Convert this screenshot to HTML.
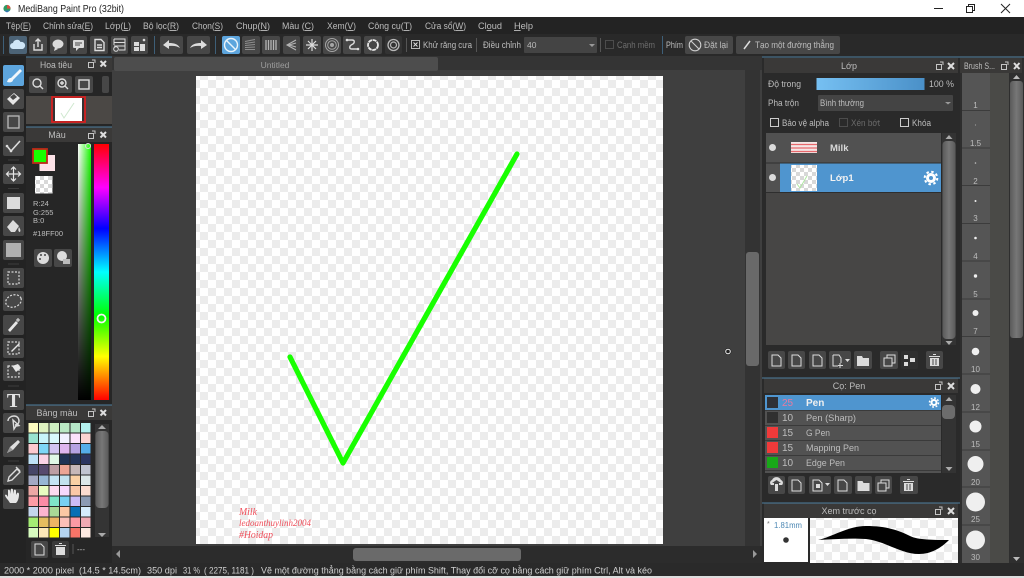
<!DOCTYPE html>
<html><head><meta charset="utf-8"><style>
html,body{margin:0;padding:0;background:#2a2a2a;width:1024px;height:578px;overflow:hidden}
svg{display:block;filter:blur(.35px)}
text{font-family:"Liberation Sans","Noto Sans CJK SC",sans-serif;font-size:9px;fill:#bdbdbd}
.b{fill:#474747}.i{fill:#dcdcdc}.s{fill:none;stroke:#dcdcdc;stroke-width:1.4}.d{fill:none;stroke:#d8d8d8;stroke-width:1.2;stroke-dasharray:2 1.5}
.h{fill:#3a3938}.l{fill:#4d7f9f}.c{text-anchor:middle}.u{text-decoration:underline}
</style></head><body>
<svg width="1024" height="578" viewBox="0 0 1024 578" xmlns="http://www.w3.org/2000/svg">
<defs>
<pattern id="ck" width="16" height="16" patternUnits="userSpaceOnUse"><rect width="16" height="16" fill="#fff"/><rect width="8" height="8" fill="#ececec"/><rect x="8" y="8" width="8" height="8" fill="#ececec"/></pattern>
<pattern id="ck2" width="8" height="8" patternUnits="userSpaceOnUse"><rect width="8" height="8" fill="#fff"/><rect width="4" height="4" fill="#d8d8d8"/><rect x="4" y="4" width="4" height="4" fill="#d8d8d8"/></pattern>
<linearGradient id="hue" x1="0" y1="0" x2="0" y2="1"><stop offset="0" stop-color="#f00"/><stop offset=".17" stop-color="#f0f"/><stop offset=".33" stop-color="#00f"/><stop offset=".5" stop-color="#0ff"/><stop offset=".67" stop-color="#0f0"/><stop offset=".83" stop-color="#ff0"/><stop offset="1" stop-color="#f00"/></linearGradient>
<linearGradient id="sat" x1="0" y1="0" x2="1" y2="0"><stop offset="0" stop-color="#fff"/><stop offset="1" stop-color="#18ff00"/></linearGradient>
<linearGradient id="blk" x1="0" y1="0" x2="0" y2="1"><stop offset="0" stop-color="#000" stop-opacity="0"/><stop offset="1" stop-color="#000"/></linearGradient>
<linearGradient id="op" x1="0" y1="0" x2="1" y2="0"><stop offset="0" stop-color="#76c0f2"/><stop offset="1" stop-color="#4a90c8"/></linearGradient>
<linearGradient id="sb" x1="0" y1="0" x2="1" y2="0"><stop offset="0" stop-color="#5a5a5a"/><stop offset=".5" stop-color="#777"/><stop offset="1" stop-color="#5a5a5a"/></linearGradient>
</defs>

<!-- title bar -->
<rect width="1024" height="17" fill="#fff"/>
<circle cx="7" cy="8.500" r="3.600" fill="#2f9a62"/><path d="M7 5a3.600 3.600 0 0 1 3.600 3.600H7z" fill="#d9503f"/><path d="M4 10.500h6l-3 2z" fill="#3572b8"/>
<text x="18" y="12" textLength="106" lengthAdjust="spacingAndGlyphs" style="font-size:10.500px;fill:#222">MediBang Paint Pro (32bit)</text>
<path d="M934 8.500h9" stroke="#222"/><path d="M966.500 6.500h6v6h-6zM968.500 6.500v-2h6v6h-2" fill="none" stroke="#222"/><path d="M1001 4l9 9M1010 4l-9 9" stroke="#222"/>

<!-- menu + toolbar -->
<rect y="17" width="1024" height="17" fill="#232323"/>
<rect y="34" width="1024" height="22" fill="#292929"/>
<text x="6" y="29" textLength="25" lengthAdjust="spacingAndGlyphs">Tệp(<tspan class="u">E</tspan>)</text>
<text x="43" y="29" textLength="50" lengthAdjust="spacingAndGlyphs">Chỉnh sửa(<tspan class="u">E</tspan>)</text>
<text x="105" y="29" textLength="26" lengthAdjust="spacingAndGlyphs">Lớp(<tspan class="u">L</tspan>)</text>
<text x="143" y="29" textLength="36" lengthAdjust="spacingAndGlyphs">Bộ lọc(<tspan class="u">R</tspan>)</text>
<text x="192" y="29" textLength="31" lengthAdjust="spacingAndGlyphs">Chọn(<tspan class="u">S</tspan>)</text>
<text x="236" y="29" textLength="34" lengthAdjust="spacingAndGlyphs">Chụp(<tspan class="u">N</tspan>)</text>
<text x="282" y="29" textLength="32" lengthAdjust="spacingAndGlyphs">Màu (<tspan class="u">C</tspan>)</text>
<text x="327" y="29" textLength="29" lengthAdjust="spacingAndGlyphs">Xem(<tspan class="u">V</tspan>)</text>
<text x="368" y="29" textLength="44" lengthAdjust="spacingAndGlyphs">Công cụ(<tspan class="u">T</tspan>)</text>
<text x="425" y="29" textLength="41" lengthAdjust="spacingAndGlyphs">Cửa sổ(<tspan class="u">W</tspan>)</text>
<text x="478" y="29" textLength="24" lengthAdjust="spacingAndGlyphs">Cl<tspan class="u">o</tspan>ud</text>
<text x="514" y="29" textLength="19" lengthAdjust="spacingAndGlyphs"><tspan class="u">H</tspan>elp</text>
<!-- toolbar seps -->
<path d="M3.500 36v18M154.500 36v18M215.500 36v18M662.500 36v18" stroke="#3e5f78"/>
<!-- toolbar buttons -->
<g class="b">
<rect x="9" y="36" width="18" height="18" rx="2" fill="#4c6376"/>
<rect x="29" y="36" width="18" height="18" rx="2"/><rect x="50" y="36" width="17" height="18" rx="2"/><rect x="70" y="36" width="17" height="18" rx="2"/><rect x="90" y="36" width="18" height="18" rx="2"/><rect x="111" y="36" width="17" height="18" rx="2"/><rect x="131" y="36" width="17" height="18" rx="2"/>
<rect x="160" y="36" width="23" height="18" rx="2"/><rect x="187" y="36" width="23" height="18" rx="2"/>
<rect x="222" y="36" width="18" height="18" rx="2" fill="#5da5dd"/>
<rect x="242" y="36" width="18" height="18" rx="2"/><rect x="262" y="36" width="18" height="18" rx="2"/><rect x="283" y="36" width="17" height="18" rx="2"/><rect x="303" y="36" width="18" height="18" rx="2"/><rect x="323" y="36" width="18" height="18" rx="2"/><rect x="343" y="36" width="18" height="18" rx="2"/><rect x="364" y="36" width="18" height="18" rx="2"/><rect x="385" y="36" width="17" height="18" rx="2" fill="#333"/>
<rect x="524" y="37" width="73" height="16" rx="1" fill="#444"/>
<rect x="685" y="36" width="48" height="18" rx="2"/><rect x="736" y="36" width="104" height="18" rx="2"/>
</g>
<!-- toolbar icons -->
<path d="M13 49a3 3 0 0 1 0-6 4 4 0 0 1 7.500-1 3.500 3.500 0 0 1 2 7z" fill="#cfe6f7"/>
<path class="s" d="M34 44v6h8v-6M38 47v-8M35.500 41.500L38 39l2.500 2.500"/>
<ellipse cx="58" cy="44" rx="5.500" ry="4.500" class="i"/><path class="i" d="M55 47l-1 4 4-2z"/>
<rect x="73" y="40" width="11" height="8" rx="1" class="i"/><path class="i" d="M76 48h3l-3 3z"/><path d="M75 43h7M75 45h5" stroke="#474747"/>
<path class="s" d="M95 39.500h6l3 3v8h-9zM97 45h5M97 47.500h5"/>
<path class="s" style="stroke-width:1" d="M114 39h11v11h-6M114 39v6M114 42.500h11M114 46h11"/><circle cx="116" cy="49" r="2.300" class="s" style="stroke-width:1"/>
<path class="i" d="M134 42h5v4h-5zM134 47h5v4h-5zM140 44h5v7h-5z"/><circle cx="144" cy="40" r="1.300" class="i"/>
<path class="i" d="M163 45l6-5v3c5 0 9 1 11 5-3-2-6-2.500-11-2v3z"/>
<path class="i" d="M207 45l-6-5v3c-5 0-9 1-11 5 3-2 6-2.500 11-2v3z"/>
<circle cx="231" cy="45" r="6.500" fill="none" stroke="#eaf4fb" stroke-width="1.400"/><path d="M226.500 40.500l9 9" stroke="#eaf4fb" stroke-width="1.400"/>
<path d="M245 41.500l10-2M245 43.500l10-1.500M245 45.500l10-1M245 47.500l10-.5M245 49.500l10 0" stroke="#8f8f8f" fill="none"/>
<path d="M266 40v10M268.500 40v10M271 40v10M273.500 40v10M276 40v10" stroke="#b4b4b4" stroke-width="1.300" fill="none"/>
<path d="M296 40l-9 5 9 5M296 43l-7 2 7 2" stroke="#b4b4b4" fill="none" stroke-width="1.100"/>
<path d="M312 39v12M306 45h12M308 41l8 8M316 41l-8 8" stroke="#dcdcdc" stroke-width="1.200"/>
<circle cx="332" cy="45" r="6.500" fill="none" stroke="#a5a5a5"/><circle cx="332" cy="45" r="4.300" fill="none" stroke="#a5a5a5"/><circle cx="332" cy="45" r="2" fill="#a5a5a5"/>
<path class="s" d="M347 40h5c3 0 3 3 0 4.500-3 1.500-3 4.500 0 4.500h6"/><circle cx="347" cy="40" r="1.300" class="i"/><circle cx="358" cy="49" r="1.300" class="i"/>
<circle cx="373" cy="45" r="5" fill="none" stroke="#e8e8e8" stroke-width="1.800" stroke-dasharray="4 .6"/>
<circle cx="393.500" cy="45" r="5.500" fill="none" stroke="#b8b8b8" stroke-width="1.300"/><circle cx="393.500" cy="45" r="3" fill="none" stroke="#b8b8b8" stroke-width="1.200"/>
<path d="M406.500 38v14M476.500 38v14M600.500 38v14" stroke="#555"/>
<rect x="411.500" y="40.500" width="8" height="8" fill="none" stroke="#bbb"/><path d="M413.500 42.500l4 4M417.500 42.500l-4 4" stroke="#ddd"/>
<text x="423" y="48" textLength="49" lengthAdjust="spacingAndGlyphs">Khử răng cưa</text>
<text x="483" y="48" textLength="38" lengthAdjust="spacingAndGlyphs">Điều chỉnh</text>
<text x="527" y="48" style="font-size:8.500px;fill:#bbb">40</text>
<path d="M589 44h6l-3 3z" fill="#999"/>
<rect x="605.500" y="40.500" width="8" height="8" fill="none" stroke="#4c4c4c"/>
<text x="617" y="48" textLength="38" lengthAdjust="spacingAndGlyphs" style="fill:#6d6d6d">Cạnh mềm</text>
<text x="666" y="48" textLength="17" lengthAdjust="spacingAndGlyphs">Phím</text>
<circle cx="695" cy="45" r="5.800" fill="none" stroke="#cfcfcf" stroke-width="1.100"/><path d="M691 41l8 8" stroke="#cfcfcf" stroke-width="1.100"/>
<text x="704" y="48" textLength="24" lengthAdjust="spacingAndGlyphs">Đặt lại</text>
<path d="M744 49l6-8" stroke="#ddd" stroke-width="1.500"/>
<text x="755" y="48" textLength="79" lengthAdjust="spacingAndGlyphs">Tạo một đường thẳng</text>

<!-- left tool column -->
<rect x="0" y="56" width="26" height="507" fill="#232323"/>
<g class="b">
<rect x="3" y="65" width="21" height="21" rx="2" fill="#5da5dd"/>
<rect x="3" y="89" width="21" height="20" rx="2"/><rect x="3" y="112" width="21" height="20" rx="2"/><rect x="3" y="136" width="21" height="20" rx="2"/>
<rect x="3" y="164" width="21" height="20" rx="2"/><rect x="3" y="193" width="21" height="20" rx="2"/><rect x="3" y="216" width="21" height="20" rx="2"/><rect x="3" y="240" width="21" height="20" rx="2"/>
<rect x="3" y="268" width="21" height="20" rx="2"/><rect x="3" y="291" width="21" height="20" rx="2"/><rect x="3" y="315" width="21" height="20" rx="2"/><rect x="3" y="338" width="21" height="20" rx="2"/><rect x="3" y="361" width="21" height="20" rx="2"/>
<rect x="3" y="390" width="21" height="20" rx="2"/><rect x="3" y="413" width="21" height="20" rx="2"/><rect x="3" y="437" width="21" height="20" rx="2"/>
<rect x="3" y="465" width="21" height="20" rx="2"/><rect x="3" y="489" width="21" height="20" rx="2"/>
</g>
<path d="M8 160h11M8 188.500h11M8 264h11M8 386h11M8 461h11" stroke="#3c3c3c"/>
<path d="M7 82c1-3 2-4 4-4l9-9 2 2-9 9c0 2-3 3-6 2z" fill="#f0f6fb"/>
<path d="M7 99l7-6 6 5-7 7z" fill="#e6e6e6"/><path d="M10 97l3 3 4-3-3-3z" fill="#474747"/>
<rect x="8" y="116" width="11" height="12" fill="none" stroke="#bbb" stroke-width="1.300"/>
<path d="M7 146l4 5 9-10" fill="none" stroke="#dcdcdc" stroke-width="1.600"/><circle cx="7" cy="146" r="1.300" class="i"/><circle cx="11" cy="151" r="1.300" class="i"/>
<path d="M13.500 167v14M6.500 174h14M11 169.500l2.500-2.500 2.500 2.500M11 178.500l2.500 2.500 2.500-2.500M9 171.500L6.500 174l2.500 2.500M18 171.500l2.500 2.500-2.500 2.500" fill="none" stroke="#e6e6e6" stroke-width="1.200"/>
<rect x="7" y="197" width="13" height="12" fill="#dcdcdc"/>
<path d="M7 227l6-7 6 6-4 6h-4zM19 227c1 2 2 3 1 5-2 0-2-3-1-5z" fill="#dcdcdc"/>
<rect x="6" y="243" width="15" height="14" fill="#b0b0b0"/>
<rect x="8" y="272" width="11" height="12" class="d"/>
<ellipse cx="13.500" cy="301" rx="8" ry="6" transform="rotate(-20 13.500 301)" class="d"/>
<path d="M8 330l8-9 2 2-8 9z" fill="#e6e6e6"/><path d="M18 318v4M16 320h4" stroke="#e6e6e6"/>
<rect x="8" y="342" width="11" height="12" class="d"/><path d="M11 351l8-8 1 1-8 8z" fill="#e6e6e6"/>
<rect x="8" y="366" width="11" height="11" class="d"/><path d="M12 366l6 -2 3 4-5 4z" fill="#e6e6e6"/>
<text x="13.500" y="407" class="c" style="font-family:'Liberation Serif',serif;font-size:20px;font-weight:bold;fill:#e4e4e4">T</text>
<path class="s" d="M8 421c0-3 3-5 6-5s5 2 5 5-3 4-4 4M13 420l1 9 2-3 3-.5z"/>
<path d="M7 453l3-6 8-7 2 2-7 8z" fill="#e0e0e0"/><path d="M7 453l3-6 3 3z" fill="#999"/>
<path class="s" d="M8 481l1-4 8-8 3 3-8 8zM16 467l4 4"/>
<path d="M8 500c-2-2-3-4-3-5 1-1 2 0 3 2l0-7c1-1 2 0 2 1v3l1-5c1-1 2 0 2 1v4l1-4c1-1 2 0 2 1v4l1-2c1-1 2 0 2 1 0 4-1 7-3 9h-6z" fill="#e6e6e6"/>

<!-- left panels bg -->
<rect x="26" y="56" width="86" height="507" fill="#262626"/>
<!-- navigator -->
<rect x="26" y="57" width="86" height="15" class="h"/><rect x="26" y="56.500" width="86" height="1" class="l"/>
<text x="56" y="68" class="c" textLength="32" lengthAdjust="spacingAndGlyphs">Hoa tiêu</text>
<rect x="88.500" y="62.500" width="5" height="5" fill="none" stroke="#c5c5c5"/><path d="M92 60h3v3" stroke="#c5c5c5" fill="none"/>
<path d="M100.500 61l5.500 5.500M106 61l-5.500 5.500" stroke="#dedede" stroke-width="2"/>
<rect x="29" y="76" width="18" height="17" rx="2" class="b"/><rect x="55" y="76" width="17" height="17" rx="2" class="b"/><rect x="75" y="76" width="18" height="17" rx="2" class="b"/><rect x="102" y="76" width="7" height="17" rx="2" class="b"/>
<circle cx="37" cy="83" r="4" class="s"/><path d="M40 86l3 3" class="s"/><circle cx="62" cy="83" r="4" class="s"/><path d="M65 86l3 3M60 83h4M62 81v4" class="s"/>
<rect x="79" y="80" width="10" height="9" class="s"/>
<rect x="26" y="96" width="86" height="28" fill="#4b4845"/>
<rect x="52" y="97" width="33" height="25" fill="#333"/><rect x="55" y="98" width="27" height="23" fill="#fff"/><rect x="52" y="97" width="33" height="25" fill="none" stroke="#d42020" stroke-width="1.800"/>
<path d="M61 113l3 5 10-15" fill="none" stroke="#cfe8cf"/>
<!-- colour -->
<rect x="26" y="127" width="86" height="15" class="h"/><rect x="26" y="126.500" width="86" height="1" class="l"/>
<text x="57" y="138" class="c">Màu</text>
<rect x="88.500" y="133.500" width="5" height="5" fill="none" stroke="#c5c5c5"/><path d="M92 131h3v3" stroke="#c5c5c5" fill="none"/>
<path d="M100.500 132l5.500 5.500M106 132l-5.500 5.500" stroke="#dedede" stroke-width="2"/>
<rect x="39.500" y="155" width="15.500" height="16" fill="#fde3e8"/>
<rect x="33" y="149" width="14" height="14" fill="#18ff00" stroke="#c02818" stroke-width="1.800"/>
<rect x="35" y="176" width="17.500" height="17.500" fill="url(#ck2)"/>
<text x="33" y="206" style="font-size:7.500px">R:24</text><text x="33" y="215" style="font-size:7.500px">G:255</text><text x="33" y="223" style="font-size:7.500px">B:0</text><text x="33" y="236" style="font-size:7.500px">#18FF00</text>
<rect x="78" y="144" width="13" height="256" fill="url(#sat)"/><rect x="78" y="144" width="13" height="256" fill="url(#blk)"/>
<rect x="94" y="144" width="15" height="256" fill="url(#hue)"/>
<circle cx="101.500" cy="318.500" r="4" fill="none" stroke="#f2f2f2" stroke-width="1.800"/>
<circle cx="88" cy="146" r="2.500" fill="none" stroke="#ddd"/>
<rect x="34" y="249" width="18" height="18" rx="2" class="b"/><rect x="54" y="249" width="18" height="18" rx="2" class="b"/>
<circle cx="43" cy="258" r="6" class="i"/><circle cx="41" cy="255" r="1" fill="#444"/><circle cx="45" cy="255" r="1" fill="#444"/><circle cx="40" cy="259" r="1" fill="#444"/>
<circle cx="62" cy="256" r="5" class="i"/><rect x="63" y="259" width="7" height="5" fill="#bbb"/>
<!-- palette -->
<rect x="26" y="405" width="86" height="15" class="h"/><rect x="26" y="404.500" width="86" height="1" class="l"/>
<text x="57" y="416" class="c">Bảng màu</text>
<rect x="88.500" y="411.500" width="5" height="5" fill="none" stroke="#c5c5c5"/><path d="M92 409h3v3" stroke="#c5c5c5" fill="none"/>
<path d="M100.500 410l5.500 5.500M106 410l-5.500 5.500" stroke="#dedede" stroke-width="2"/>
<g>
<rect x="28.500" y="423" width="9.500" height="9.500" fill="#fdfcc0"/><rect x="39" y="423" width="9.500" height="9.500" fill="#dff3c0"/><rect x="49.500" y="423" width="9.500" height="9.500" fill="#cdeec0"/><rect x="60" y="423" width="9.500" height="9.500" fill="#b9e8c3"/><rect x="70.500" y="423" width="9.500" height="9.500" fill="#b5e7c8"/><rect x="81" y="423" width="9.500" height="9.500" fill="#b3f1ee"/>
<rect x="28.500" y="433.500" width="9.500" height="9.500" fill="#99e3d0"/><rect x="39" y="433.500" width="9.500" height="9.500" fill="#c8f4fa"/><rect x="49.500" y="433.500" width="9.500" height="9.500" fill="#d9f9fc"/><rect x="60" y="433.500" width="9.500" height="9.500" fill="#f2f2ff"/><rect x="70.500" y="433.500" width="9.500" height="9.500" fill="#fbe2fc"/><rect x="81" y="433.500" width="9.500" height="9.500" fill="#fbd4d2"/>
<rect x="28.500" y="444" width="9.500" height="9.500" fill="#fcc9cf"/><rect x="39" y="444" width="9.500" height="9.500" fill="#7ed6f7"/><rect x="49.500" y="444" width="9.500" height="9.500" fill="#d3c5f2"/><rect x="60" y="444" width="9.500" height="9.500" fill="#ddb6ee"/><rect x="70.500" y="444" width="9.500" height="9.500" fill="#b5a2e2"/><rect x="81" y="444" width="9.500" height="9.500" fill="#55ade8"/>
<rect x="28.500" y="454.500" width="9.500" height="9.500" fill="#bfe2f7"/><rect x="39" y="454.500" width="9.500" height="9.500" fill="#fcd3e6"/><rect x="49.500" y="454.500" width="9.500" height="9.500" fill="#e0f8e6"/><rect x="60" y="454.500" width="9.500" height="9.500" fill="#1f3354"/><rect x="70.500" y="454.500" width="9.500" height="9.500" fill="#243458"/><rect x="81" y="454.500" width="9.500" height="9.500" fill="#2c3660"/>
<rect x="28.500" y="465" width="9.500" height="9.500" fill="#464668"/><rect x="39" y="465" width="9.500" height="9.500" fill="#574a6d"/><rect x="49.500" y="465" width="9.500" height="9.500" fill="#bd9ea4"/><rect x="60" y="465" width="9.500" height="9.500" fill="#eca594"/><rect x="70.500" y="465" width="9.500" height="9.500" fill="#c6b8b8"/><rect x="81" y="465" width="9.500" height="9.500" fill="#c1c4d0"/>
<rect x="28.500" y="475.500" width="9.500" height="9.500" fill="#a3a9c4"/><rect x="39" y="475.500" width="9.500" height="9.500" fill="#97b7d4"/><rect x="49.500" y="475.500" width="9.500" height="9.500" fill="#c5e4f4"/><rect x="60" y="475.500" width="9.500" height="9.500" fill="#c2e2ee"/><rect x="70.500" y="475.500" width="9.500" height="9.500" fill="#fad1a4"/><rect x="81" y="475.500" width="9.500" height="9.500" fill="#dce7e8"/>
<rect x="28.500" y="486" width="9.500" height="9.500" fill="#eda8a5"/><rect x="39" y="486" width="9.500" height="9.500" fill="#e8fdc0"/><rect x="49.500" y="486" width="9.500" height="9.500" fill="#fcdaf0"/><rect x="60" y="486" width="9.500" height="9.500" fill="#f6d8fc"/><rect x="70.500" y="486" width="9.500" height="9.500" fill="#fbc8a6"/><rect x="81" y="486" width="9.500" height="9.500" fill="#fcdcd0"/>
<rect x="28.500" y="496.500" width="9.500" height="9.500" fill="#fc9ca6"/><rect x="39" y="496.500" width="9.500" height="9.500" fill="#fa8ca6"/><rect x="49.500" y="496.500" width="9.500" height="9.500" fill="#7fe4c8"/><rect x="60" y="496.500" width="9.500" height="9.500" fill="#78d0f2"/><rect x="70.500" y="496.500" width="9.500" height="9.500" fill="#ccbcf5"/><rect x="81" y="496.500" width="9.500" height="9.500" fill="#8c9bb4"/>
<rect x="28.500" y="507" width="9.500" height="9.500" fill="#c4d6ee"/><rect x="39" y="507" width="9.500" height="9.500" fill="#fcb4d0"/><rect x="49.500" y="507" width="9.500" height="9.500" fill="#a9d896"/><rect x="60" y="507" width="9.500" height="9.500" fill="#fbc8a4"/><rect x="70.500" y="507" width="9.500" height="9.500" fill="#0a6fb4"/><rect x="81" y="507" width="9.500" height="9.500" fill="#d5ecfc"/>
<rect x="28.500" y="517.500" width="9.500" height="9.500" fill="#a4ec74"/><rect x="39" y="517.500" width="9.500" height="9.500" fill="#e4bc60"/><rect x="49.500" y="517.500" width="9.500" height="9.500" fill="#ecb464"/><rect x="60" y="517.500" width="9.500" height="9.500" fill="#fcc0b8"/><rect x="70.500" y="517.500" width="9.500" height="9.500" fill="#fc9aa4"/><rect x="81" y="517.500" width="9.500" height="9.500" fill="#f0aab4"/>
<rect x="28.500" y="528" width="9.500" height="9.500" fill="#d8fcc0"/><rect x="39" y="528" width="9.500" height="9.500" fill="#fde8b8"/><rect x="49.500" y="528" width="9.500" height="9.500" fill="#ffff00"/><rect x="60" y="528" width="9.500" height="9.500" fill="#b4d4f0"/><rect x="70.500" y="528" width="9.500" height="9.500" fill="#f87468"/><rect x="81" y="528" width="9.500" height="9.500" fill="#fce8e0"/>
</g>
<rect x="95" y="424" width="14" height="113" fill="#343434"/><rect x="95.500" y="431" width="13" height="77" rx="4" fill="url(#sb)"/>
<path d="M102 425l-4 4h8zM102 537l-4-4h8z" fill="#aaa"/>
<rect x="31" y="541" width="17" height="17" rx="2" class="b"/><rect x="52" y="541" width="17" height="17" rx="2" fill="#3a3a3a"/>
<path class="s" d="M35 544h6l3 3v8h-9z" style="stroke-width:1"/><path class="i" d="M56 547h9v8h-9zM55 545h11v1h-11zM59 543h3v1h-3z"/>
<path d="M73 544v10" stroke="#555"/><text x="77" y="552" style="font-size:8px">---</text>

<!-- canvas area -->
<rect x="112" y="56" width="650" height="507" fill="#3f3f3f"/>
<rect x="112" y="56" width="650" height="14" fill="#343434"/>
<rect x="114" y="57" width="324" height="14" rx="2" fill="#4d4d4d"/>
<text x="275" y="68" class="c" style="font-size:8.500px;fill:#9d9d9d">Untitled</text>
<rect x="196" y="76" width="467" height="468" fill="url(#ck)"/>
<polyline points="290,357 343,463 517,154" fill="none" stroke="#18ff00" stroke-width="5.200" stroke-linecap="round" stroke-linejoin="round"/>
<text x="239" y="515" textLength="18" lengthAdjust="spacingAndGlyphs" style="font-family:'Liberation Serif',serif;font-style:italic;font-size:10px;fill:#f0505c">Milk</text>
<text x="239" y="526" textLength="72" lengthAdjust="spacingAndGlyphs" style="font-family:'Liberation Serif',serif;font-style:italic;font-size:9.500px;fill:#f0505c">ledoanthuylinh2004</text>
<text x="239" y="538" textLength="34" lengthAdjust="spacingAndGlyphs" style="font-family:'Liberation Serif',serif;font-style:italic;font-size:10px;fill:#f0505c">#Hoidap</text>
<!-- canvas scrollbars -->
<rect x="112" y="546" width="650" height="17" fill="#2c2c2c"/>
<rect x="353" y="548" width="168" height="13" rx="3" fill="#6a6a6a"/>
<path d="M116 554l4-4v8zM757 554l-4-4v8z" fill="#999"/>
<rect x="745" y="70" width="15" height="476" fill="#333"/>
<rect x="746" y="252" width="13" height="114" rx="3" fill="#696969"/>
<circle cx="728" cy="351.500" r="3.400" fill="#222"/><circle cx="728" cy="351.500" r="2.300" fill="none" stroke="#eee" stroke-width="1"/>

<!-- layer panel -->
<rect x="762" y="56" width="198" height="322" fill="#2a2a2a"/>
<rect x="764" y="58" width="194" height="15" class="h"/><rect x="762" y="56.500" width="198" height="1" class="l"/>
<text x="849" y="69" class="c">Lớp</text>
<rect x="936.500" y="64.500" width="5" height="5" fill="none" stroke="#c5c5c5"/><path d="M940 62h3v3" stroke="#c5c5c5" fill="none"/>
<path d="M948 63l6 6M954 63l-6 6" stroke="#dedede" stroke-width="2"/>
<text x="768" y="87" textLength="33" lengthAdjust="spacingAndGlyphs">Độ trong</text>
<rect x="816.500" y="78" width="108" height="12" fill="url(#op)"/>
<text x="929" y="87" textLength="25" lengthAdjust="spacingAndGlyphs">100 %</text>
<text x="768" y="106" textLength="31" lengthAdjust="spacingAndGlyphs">Pha trộn</text>
<rect x="818" y="95" width="135" height="16" rx="1" fill="#444"/>
<text x="820" y="106" textLength="44" lengthAdjust="spacingAndGlyphs">Bình thường</text>
<path d="M945 102h6l-3 2.500z" fill="#999"/>
<rect x="770.500" y="118.500" width="8" height="8" fill="none" stroke="#ccc"/><text x="782" y="126" textLength="47" lengthAdjust="spacingAndGlyphs">Bảo vệ alpha</text>
<rect x="839.500" y="118.500" width="8" height="8" fill="none" stroke="#4c4c4c"/><text x="851" y="126" textLength="29" lengthAdjust="spacingAndGlyphs" style="fill:#6b6b6b">Xén bớt</text>
<rect x="900.500" y="118.500" width="8" height="8" fill="none" stroke="#ccc"/><text x="912" y="126" textLength="19" lengthAdjust="spacingAndGlyphs">Khóa</text>
<rect x="766" y="133" width="175" height="212" fill="#474645"/>
<rect x="766" y="133" width="175" height="30" fill="#515151"/>
<rect x="766" y="163" width="14" height="29" fill="#515151"/>
<rect x="780" y="163.500" width="161" height="29" fill="#4f95cf"/>
<path d="M766 163h175M766 192.500h175" stroke="#2e2e2e"/>
<circle cx="772.500" cy="147.500" r="3.500" fill="#dcdcdc"/><circle cx="772.500" cy="177.500" r="3.500" fill="#dcdcdc"/>
<rect x="791" y="142" width="26" height="11" fill="#f4e6e6"/><path d="M791 144.500h26M791 148h26M791 151.500h26" stroke="#e8686c" stroke-width="1.300"/>
<rect x="791" y="165" width="26" height="26" fill="url(#ck2)"/><path d="M797 184l3 4 7-12" stroke="#aee8a0" fill="none"/>
<text x="830" y="151" style="font-size:9.500px;font-weight:bold;fill:#d9d9d9">Milk</text>
<text x="830" y="181" style="font-size:9.500px;font-weight:bold;fill:#f2f2f2">Lớp1</text>
<circle cx="931" cy="178" r="3.500" fill="none" stroke="#fff" stroke-width="3"/><circle cx="931" cy="178" r="6.300" fill="none" stroke="#fff" stroke-width="2" stroke-dasharray="2.500 2.450"/>
<rect x="942" y="133" width="14" height="212" fill="#333"/><rect x="942.500" y="141" width="13" height="198" rx="4" fill="url(#sb)"/>
<path d="M949 135l-3.500 4h7zM949 345l-3.500-4h7z" fill="#aaa"/>
<g class="b"><rect x="768" y="351" width="17" height="18" rx="2"/><rect x="788" y="351" width="17" height="18" rx="2"/><rect x="809" y="351" width="17" height="18" rx="2"/><rect x="829" y="351" width="22" height="18" rx="2"/><rect x="854" y="351" width="18" height="18" rx="2"/><rect x="880" y="351" width="18" height="18" rx="2"/><rect x="901" y="351" width="17" height="18" rx="2" fill="#2f2f2f"/><rect x="926" y="351" width="17" height="18" rx="2"/></g>
<path class="s" style="stroke-width:1" d="M772 355h6l3 3v8h-9zM792 355h6l3 3v8h-9zM813 355h6l3 3v8h-9zM833 355h6l2 3v5M833 355v11h5M840 363v5M838 365.500h5"/>
<path d="M845 359h5l-2.500 3z" class="i"/>
<path class="i" d="M857 356h5l1 2h6v8h-12z"/>
<path class="s" style="stroke-width:1" d="M884 358h8v8h-8zM887 358v-3h8v8h-3"/>
<rect x="904" y="355" width="4" height="4" class="i"/><rect x="904" y="362" width="4" height="4" class="i"/><rect x="910" y="358" width="5" height="4" class="i"/>
<path class="i" d="M929 356h11v1h-11zM933 354h3v1h-3zM930 358h9v8h-9z"/><path d="M933 359v6M936 359v6" stroke="#474747"/>

<!-- brush panel -->
<rect x="762" y="378" width="198" height="125" fill="#2a2a2a"/>
<rect x="764" y="378" width="194" height="15" class="h"/><rect x="762" y="377.500" width="198" height="1" class="l"/>
<text x="849" y="389" class="c">Cọ: Pen</text>
<rect x="935.500" y="384.500" width="5" height="5" fill="none" stroke="#c5c5c5"/><path d="M939 382h3v3" stroke="#c5c5c5" fill="none"/>
<path d="M948 383l6 6M954 383l-6 6" stroke="#dedede" stroke-width="2"/>
<rect x="765" y="395" width="176" height="78" fill="#525252"/>
<rect x="765" y="395" width="176" height="15" fill="#4f95cf"/>
<path d="M765 410.500h176M765 425.500h176M765 440.500h176M765 455.500h176M765 470.500h176" stroke="#3a3a3a"/>
<rect x="767" y="397" width="11" height="11" fill="#2e3036"/><rect x="767" y="412" width="11" height="11" fill="#303030"/><rect x="767" y="427" width="11" height="11" fill="#f03a3a"/><rect x="767" y="442" width="11" height="11" fill="#f03a3a"/><rect x="767" y="457" width="11" height="11" fill="#18a818"/>
<text x="782" y="406" style="font-size:10px;fill:#e87aa0">25</text>
<text x="782" y="421" style="font-size:10px">10</text><text x="782" y="436" style="font-size:10px">15</text><text x="782" y="451" style="font-size:10px">15</text><text x="782" y="466" style="font-size:10px">10</text>
<text x="806" y="406" style="font-size:10px;font-weight:bold;fill:#f0f0f0">Pen</text>
<text x="806" y="421" textLength="50" lengthAdjust="spacingAndGlyphs" style="font-size:9.500px">Pen (Sharp)</text>
<text x="806" y="436" textLength="24" lengthAdjust="spacingAndGlyphs" style="font-size:9.500px">G Pen</text>
<text x="806" y="451" textLength="53" lengthAdjust="spacingAndGlyphs" style="font-size:9.500px">Mapping Pen</text>
<text x="806" y="466" textLength="39" lengthAdjust="spacingAndGlyphs" style="font-size:9.500px">Edge Pen</text>
<circle cx="934" cy="402.500" r="2.500" fill="none" stroke="#fff" stroke-width="2"/><circle cx="934" cy="402.500" r="4.500" fill="none" stroke="#fff" stroke-width="1.500" stroke-dasharray="1.800 1.730"/>
<rect x="942" y="395" width="14" height="78" fill="#333"/><rect x="942" y="405" width="13" height="14" rx="4" fill="#6c6c6c"/>
<path d="M949 397l-3.500 4h7zM949 471l-3.500-4h7z" fill="#aaa"/>
<g class="b"><rect x="768" y="476" width="17" height="18" rx="2"/><rect x="788" y="476" width="17" height="18" rx="2"/><rect x="809" y="476" width="22" height="18" rx="2"/><rect x="834" y="476" width="18" height="18" rx="2"/><rect x="855" y="476" width="17" height="18" rx="2"/><rect x="875" y="476" width="17" height="18" rx="2"/><rect x="900" y="476" width="18" height="18" rx="2"/></g>
<path class="i" d="M771 485a3 3 0 0 1 1-5 5 5 0 0 1 9 0 3 3 0 0 1 1 5h-3v-2h2l-4.500-3-4.500 3h2v2zM775 484h3v7h-3z"/>
<path class="s" style="stroke-width:1" d="M792 480h6l3 3v8h-9zM813 480h6l3 3v8h-9zM838 480h6l3 3v8h-9z"/>
<path d="M825 483h5l-2.500 3z" class="i"/><rect x="816" y="484" width="4" height="4" class="i"/>
<path class="i" d="M857.500 481h5l1 2h6v8h-12z"/>
<path class="s" style="stroke-width:1" d="M878 483h8v8h-8zM881 483v-3h8v8h-3"/>
<path class="i" d="M903 481h11v1h-11zM907 479h3v1h-3zM904 483h9v8h-9z"/><path d="M907 484v6M910 484v6" stroke="#474747"/>
<!-- brush preview -->
<rect x="762" y="503" width="198" height="60" fill="#2a2a2a"/>
<rect x="764" y="503" width="194" height="15" class="h"/><rect x="762" y="502.500" width="198" height="1" class="l"/>
<text x="849" y="514" class="c">Xem trước cọ</text>
<rect x="935.500" y="509.500" width="5" height="5" fill="none" stroke="#c5c5c5"/><path d="M939 507h3v3" stroke="#c5c5c5" fill="none"/>
<path d="M948 508l6 6M954 508l-6 6" stroke="#dedede" stroke-width="2"/>
<rect x="764" y="518" width="44" height="44" fill="#fff"/>
<rect x="810" y="518" width="148" height="45" fill="url(#ck)"/>
<text x="767" y="526" style="font-size:7px;fill:#777">*</text>
<text x="774" y="528" textLength="28" lengthAdjust="spacingAndGlyphs" style="font-size:8.500px;fill:#4d88b4">1.81mm</text>
<circle cx="786" cy="540" r="2.800" fill="#333"/>
<path d="M818 540c14-3 30-14 48-14 20 0 32 4 44 10 8 4 24 4 39 4-8 8-18 14-30 14-18 0-34-13-53-15-14-1-32 0-48 1z" fill="#000"/>

<!-- brush size -->
<rect x="960" y="56" width="64" height="507" fill="#2e2e2e"/>
<rect x="960" y="58" width="62" height="15" class="h"/><rect x="960" y="56.500" width="64" height="1" class="l"/>
<text x="964" y="69" textLength="31" lengthAdjust="spacingAndGlyphs">Brush S...</text>
<rect x="1001.500" y="64.500" width="5" height="5" fill="none" stroke="#c5c5c5"/><path d="M1005 62h3v3" stroke="#c5c5c5" fill="none"/>
<path d="M1014 63l5.500 6M1019.500 63l-5.500 6" stroke="#dedede" stroke-width="2"/>
<rect x="962" y="73" width="28" height="490" fill="#555"/>
<rect x="990" y="73" width="19" height="490" fill="#4a4a47"/>
<path d="M962 110.500h28M962 148h28M962 185.500h28M962 223.500h28M962 261h28M962 299h28M962 336.500h28M962 374h28M962 412h28M962 450h28M962 487h28M962 525h28" stroke="#3c3c3c"/>
<text x="975.500" y="108" class="c" style="font-size:8px">1</text><text x="975.500" y="146" class="c" style="font-size:8px">1.5</text><text x="975.500" y="184" class="c" style="font-size:8px">2</text><text x="975.500" y="221" class="c" style="font-size:8px">3</text><text x="975.500" y="259" class="c" style="font-size:8px">4</text><text x="975.500" y="297" class="c" style="font-size:8px">5</text><text x="975.500" y="334" class="c" style="font-size:8px">7</text><text x="975.500" y="372" class="c" style="font-size:8px">10</text><text x="975.500" y="410" class="c" style="font-size:8px">12</text><text x="975.500" y="447" class="c" style="font-size:8px">15</text><text x="975.500" y="485" class="c" style="font-size:8px">20</text><text x="975.500" y="522" class="c" style="font-size:8px">25</text><text x="975.500" y="560" class="c" style="font-size:8px">30</text>
<g fill="#efefef">
<circle cx="975.500" cy="125" r=".6" opacity=".5"/><circle cx="975.500" cy="163" r=".8" opacity=".7"/><circle cx="975.500" cy="201" r="1"/><circle cx="975.500" cy="238" r="1.300"/><circle cx="975.500" cy="276" r="1.700"/><circle cx="975.500" cy="313" r="3"/><circle cx="975.500" cy="351.500" r="3.800"/><circle cx="975.500" cy="389" r="5"/><circle cx="975.500" cy="426.500" r="6"/><circle cx="975.500" cy="464" r="8"/><circle cx="975.500" cy="502" r="9.500"/><circle cx="975.500" cy="540" r="9.500"/>
</g>
<rect x="1010" y="73" width="13" height="490" fill="#2f2f2f"/>
<rect x="1010" y="81" width="13" height="257" rx="3" fill="url(#sb)"/>
<path d="M1016.500 75l-3.500 4h7zM1016.500 561l-3.500-4h7z" fill="#bbb"/>

<!-- status -->
<rect y="563" width="1024" height="15" fill="#2a2a2a"/>
<rect y="576" width="1024" height="2" fill="#ddd"/>
<text x="4" y="573.500" textLength="70" lengthAdjust="spacingAndGlyphs" style="fill:#d0d0d0">2000 * 2000 pixel</text>
<text x="79" y="573.500" textLength="62" lengthAdjust="spacingAndGlyphs" style="fill:#d0d0d0">(14.5 * 14.5cm)</text>
<text x="147" y="573.500" textLength="30" lengthAdjust="spacingAndGlyphs" style="fill:#d0d0d0">350 dpi</text>
<text x="183" y="573.500" textLength="17" lengthAdjust="spacingAndGlyphs" style="fill:#d0d0d0">31 %</text>
<text x="204" y="573.500" textLength="50" lengthAdjust="spacingAndGlyphs" style="fill:#d0d0d0">( 2275, 1181 )</text>
<text x="261" y="573.500" textLength="391" lengthAdjust="spacingAndGlyphs" style="fill:#d0d0d0">Vẽ một đường thẳng bằng cách giữ phím Shift, Thay đổi cỡ cọ bằng cách giữ phím Ctrl, Alt và kéo</text>
</svg>
</body></html>
